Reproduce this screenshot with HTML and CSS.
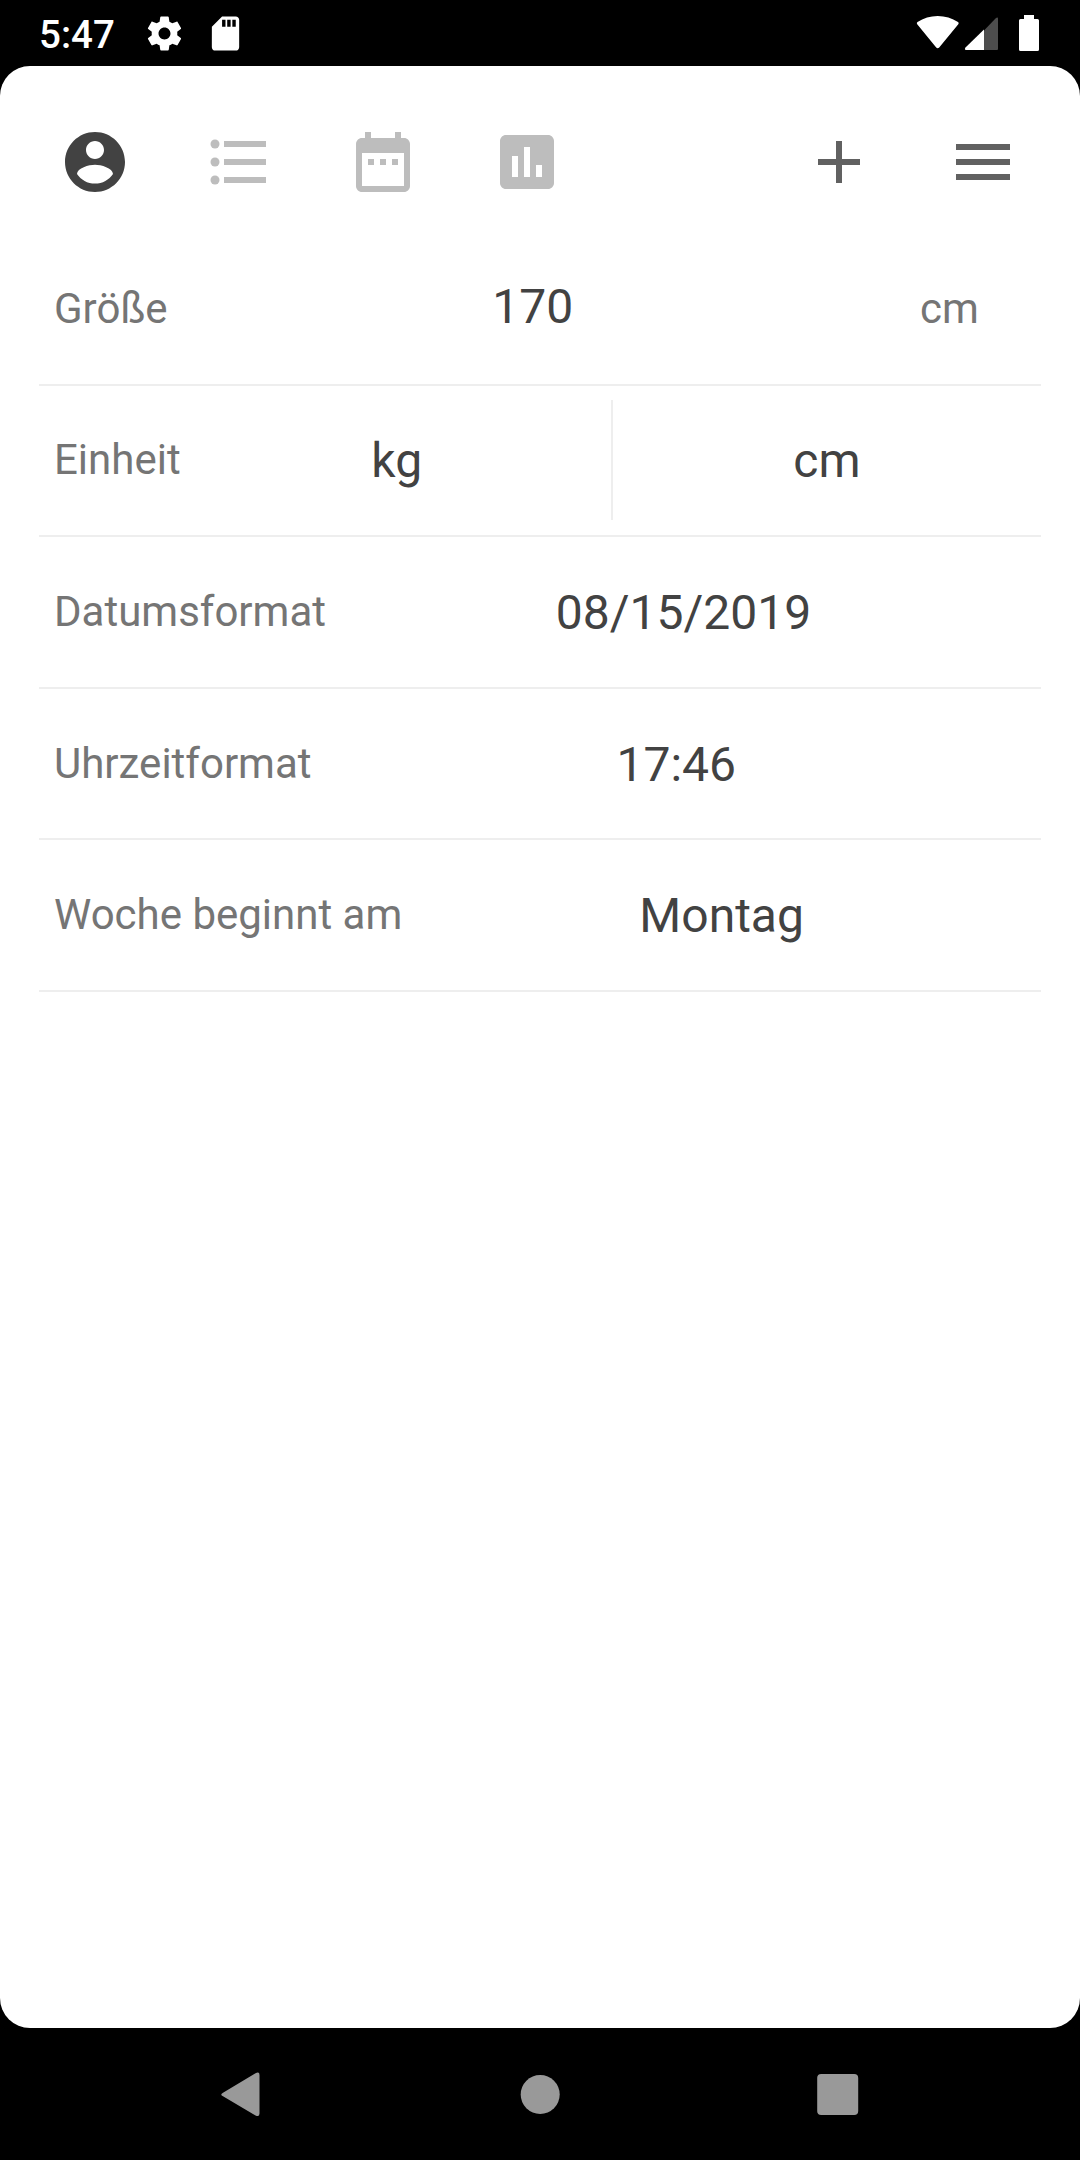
FILE: index.html
```html
<!DOCTYPE html>
<html lang="de">
<head>
    <meta charset="UTF-8">
    <meta name="viewport" content="width=device-width, initial-scale=1.0">
    <title>Profil</title>
    <link rel="stylesheet" href="styles.css">
</head>
<body>

<!-- Status bar -->
<div class="status-bar">
    <span class="clock">5:47</span>
    <svg class="status-icon gear" viewBox="0 0 24 24"><path d="M19.43 12.98c.04-.32.07-.64.07-.98s-.03-.66-.07-.98l2.11-1.65c.19-.15.24-.42.12-.64l-2-3.46c-.12-.22-.39-.3-.61-.22l-2.49 1c-.52-.4-1.08-.73-1.69-.98l-.38-2.65C14.46 2.18 14.25 2 14 2h-4c-.25 0-.46.18-.49.42l-.38 2.65c-.61.25-1.17.59-1.69.98l-2.49-1c-.23-.09-.49 0-.61.22l-2 3.46c-.13.22-.07.49.12.64l2.11 1.65c-.04.32-.07.65-.07.98s.03.66.07.98l-2.11 1.65c-.19.15-.24.42-.12.64l2 3.46c.12.22.39.3.61.22l2.49-1c.52.4 1.08.73 1.69.98l.38 2.65c.03.24.24.42.49.42h4c.25 0 .46-.18.49-.42l.38-2.65c.61-.25 1.17-.59 1.69-.98l2.49 1c.23.09.49 0 .61-.22l2-3.46c.12-.22.07-.49-.12-.64l-2.11-1.65zM12 15.5c-1.93 0-3.5-1.57-3.5-3.5s1.57-3.5 3.5-3.5 3.5 1.57 3.5 3.5-1.57 3.5-3.5 3.5z"/></svg>
    <svg class="status-icon sd" viewBox="0 0 24 24"><path d="M18 2h-8L4.02 8 4 20c0 1.1.9 2 2 2h12c1.1 0 2-.9 2-2V4c0-1.1-.9-2-2-2zm-6 6h-2V4h2v4zm3 0h-2V4h2v4zm3 0h-2V4h2v4z"/></svg>
    <svg class="signals" viewBox="0 0 124 38">
        <path d="M2.200 9.200Q1.200 8 2.500 7Q11.500 1 22.700 1T43 7Q44.300 8 43.300 9.200L24.200 32.500Q22.700 34 21.200 32.500Z"/>
        <path class="dim" d="M69 15.5L80.5 3.5Q83 1.3 83 4V34Q83 35 82 35H69Z"/>
        <path d="M69 14.5V35H51Q49 34.5 50.5 32.5Z"/>
        <path d="M109 0h10v4h3.5q1.5 0 1.5 1.5v29q0 1.500-1.500 1.500h-17q-1.500 0-1.500-1.500v-29q0-1.500 1.500-1.500h3.500z"/>
    </svg>
</div>

<div class="screen">
    <!-- Toolbar -->
    <div class="toolbar">
        <button class="tool active"><svg viewBox="0 0 24 24"><path d="M12 2C6.48 2 2 6.48 2 12s4.48 10 10 10 10-4.48 10-10S17.52 2 12 2zm0 3c1.66 0 3 1.34 3 3s-1.34 3-3 3-3-1.34-3-3 1.34-3 3-3zm0 14.2c-2.5 0-4.71-1.28-6-3.22.03-1.99 4-3.08 6-3.08 1.99 0 5.97 1.09 6 3.08-1.29 1.94-3.5 3.22-6 3.22z"/></svg></button>
        <button class="tool"><svg viewBox="0 0 24 24"><circle cx="4" cy="6" r="1.5"/><circle cx="4" cy="12" r="1.5"/><circle cx="4" cy="18" r="1.5"/><path d="M7 5h14v2H7zM7 11h14v2H7zM7 17h14v2H7z"/></svg></button>
        <button class="tool"><svg viewBox="0 0 24 24"><path d="M9 11H7v2h2v-2zm4 0h-2v2h2v-2zm4 0h-2v2h2v-2zm2-7h-1V2h-2v2H8V2H6v2H5c-1.11 0-1.99.9-1.99 2L3 20c0 1.1.89 2 2 2h14c1.1 0 2-.9 2-2V6c0-1.1-.9-2-2-2zm0 16H5V9h14v11z"/></svg></button>
        <button class="tool"><svg viewBox="0 0 24 24"><path d="M19 3H5c-1.1 0-2 .9-2 2v14c0 1.1.9 2 2 2h14c1.1 0 2-.9 2-2V5c0-1.1-.9-2-2-2zM9 17H7v-7h2v7zm4 0h-2V7h2v10zm4 0h-2v-4h2v4z"/></svg></button>
        <button class="tool action push"><svg viewBox="0 0 24 24"><path d="M19 13h-6v6h-2v-6H5v-2h6V5h2v6h6v2z"/></svg></button>
        <button class="tool action"><svg viewBox="0 0 24 24"><path d="M3 18h18v-2H3v2zm0-5h18v-2H3v2zm0-7v2h18V6H3z"/></svg></button>
    </div>

    <!-- Settings -->
    <div class="settings">
        <div class="row baseline">
            <span class="label">Größe</span>
            <span class="value">170</span>
            <span class="unit">cm</span>
        </div>
        <div class="row split">
            <span class="label">Einheit</span>
            <span class="value">kg</span>
            <span class="divider"></span>
            <span class="value">cm</span>
        </div>
        <div class="row">
            <span class="label">Datumsformat</span>
            <span class="value">08/15/2019</span>
        </div>
        <div class="row">
            <span class="label">Uhrzeitformat</span>
            <span class="value">17:46</span>
        </div>
        <div class="row">
            <span class="label">Woche beginnt am</span>
            <span class="value">Montag</span>
        </div>
    </div>
</div>

<!-- Navigation bar -->
<div class="nav-bar">
    <svg class="nav-icon" viewBox="0 0 48 48"><path d="M4 22.700L36.500 3.300Q40.500 1.300 40.500 5V43.500Q40.500 47.200 36.500 45.500L4 26.300Q.5 24.500 4 22.700Z"/></svg>
    <svg class="nav-icon" viewBox="0 0 48 48"><circle cx="24.2" cy="24.5" r="19.5"/></svg>
    <svg class="nav-icon" viewBox="0 0 48 48"><rect x="4.200" y="4" width="41" height="41" rx="4"/></svg>
</div>

</body>
</html>
```
FILE: styles.css
```css
/* Colors */
:root {
    --black: #000000;
    --white: #FFFFFF;
    --active-color: #424242;
    --action-color: #616161;
    --muted-color: #BDBDBD;
    --label-color: #757575;
    --line-color: #EEEEEE;
    --nav-color: #999999;
}

* {
    box-sizing: border-box;
}

body {
    margin: 0;
    width: 1080px;
    height: 2160px;
    display: flex;
    flex-direction: column;
    background-color: var(--black);
    font-family: Roboto, sans-serif;
    overflow: hidden;
}

/* Status bar */
.status-bar {
    height: 66px;
    display: flex;
    align-items: center;
    padding: 0 41px 0 39px;
    color: var(--white);
    fill: currentColor;
}

.clock {
    width: 105px;
    font-size: 38.5px;
    font-weight: 500;
    line-height: 66px;
    padding-top: 3px;
}

.status-icon {
    width: 41px;
    height: 41px;
}

.sd {
    margin-left: 20px;
}

.signals {
    width: 124px;
    height: 38px;
    margin-left: auto;
    margin-top: 2px;
}

.dim {
    opacity: 0.3;
}

/* White sheet */
.screen {
    flex: 1;
    background-color: var(--white);
    border-radius: 30px;
}

.toolbar {
    height: 168px;
    display: flex;
    padding: 24px 25px 0 23px;
}

.tool {
    width: 144px;
    height: 144px;
    padding: 36px;
    border: none;
    background: none;
    color: var(--muted-color);
}

.tool svg {
    display: block;
    width: 72px;
    height: 72px;
    fill: currentColor;
}

.tool.active {
    color: var(--active-color);
}

.tool.action {
    color: var(--action-color);
}

.push {
    margin-left: auto;
}

/* Settings rows */
.settings {
    padding: 0 39px;
}

.row {
    height: 151.6px;
    display: flex;
    align-items: center;
    padding-left: 15px;
    border-bottom: 2px solid var(--line-color);
}

.label,
.unit {
    font-size: 42px;
    line-height: 50px;
    color: var(--label-color);
}

.split .label {
    margin-right: 2px;
}

.value {
    flex: 1;
    padding-top: 2px;
    font-size: 48px;
    line-height: 56px;
    text-align: center;
    color: var(--active-color);
}

.baseline {
    align-items: baseline;
    padding-top: 43px;
}

.unit {
    width: 143px;
    padding-left: 22px;
}

.divider {
    width: 2px;
    height: 120px;
    background-color: var(--line-color);
}

/* Navigation bar */
.nav-bar {
    height: 132px;
    display: flex;
    align-items: center;
    justify-content: center;
    gap: 249px;
    padding-right: 1px;
}

.nav-icon {
    width: 48px;
    height: 48px;
    fill: var(--nav-color);
}
```
